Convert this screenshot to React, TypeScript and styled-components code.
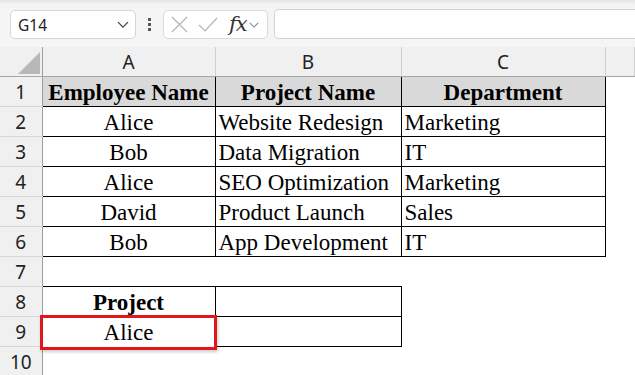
import React from 'react';
import styled, { createGlobalStyle } from 'styled-components';

const GlobalStyle = createGlobalStyle`
  html, body {
    margin: 0;
    padding: 0;
    background: #f5f5f5;
    overflow: hidden;
  }
  * {
    box-sizing: border-box;
  }
`;

const Window = styled.div`
  width: 635px;
  height: 375px;
  overflow: hidden;
  background: #f5f5f5;
  font-family: 'Noto Sans', 'Open Sans', sans-serif;
`;

const Toolbar = styled.div`
  height: 47px;
  display: flex;
  align-items: flex-start;
  padding-top: 9px;
  padding-left: 10px;
  background: linear-gradient(#e4e4e4 0px, #f3f3f3 4px, #f5f5f5 9px);
`;

const NameBox = styled.div`
  width: 126px;
  height: 29px;
  margin-top: 1px;
  background: #fff;
  border: 1px solid #d6d6d6;
  border-radius: 5px;
  display: flex;
  align-items: center;
  justify-content: space-between;
  padding: 0 6px 0 7px;
  font-size: 15.5px;
  color: #222;
`;

const Dots = styled.div`
  width: 27px;
  height: 29px;
  margin-top: 1px;
  display: flex;
  flex-direction: column;
  align-items: center;
  justify-content: center;
  gap: 2px;

  span {
    width: 3px;
    height: 3px;
    background: #555;
  }
`;

const FormulaTools = styled.div`
  width: 105px;
  height: 29px;
  margin-top: 1px;
  background: #fff;
  border: 1px solid #d9d9d9;
  border-radius: 5px;
  display: flex;
  align-items: center;
  padding: 0 5px 0 7px;
  gap: 10px;
`;

const Fx = styled.span`
  font-family: 'DejaVu Serif', 'Liberation Serif', serif;
  font-style: italic;
  font-size: 21px;
  line-height: 1;
  color: #333;
  margin-left: 1px;
  margin-right: -8px;
  letter-spacing: -1px;
`;

const FormulaInput = styled.div`
  flex: 1;
  height: 30px;
  margin-left: 6px;
  margin-right: -8px;
  background: #fff;
  border: 1px solid #d2d2d2;
  border-radius: 5px;
`;

const Sheet = styled.table`
  border-collapse: collapse;
  table-layout: fixed;
  width: 635px;
  background: #fff;
`;

const ColHeader = styled.th<{ $corner?: boolean }>`
  height: 29px;
  padding: 0;
  background: #f0f0f0;
  border-right: 1px solid ${(p) => (p.$corner ? '#9e9e9e' : '#cfcfcf')};
  border-bottom: 1px solid #a6a6a6;
  font-weight: 400;
  font-size: 19px;
  color: #222;
  vertical-align: middle;
`;

const Corner = styled.div`
  height: 29px;
  display: flex;
  align-items: flex-end;
  justify-content: flex-end;
  padding: 0 2px 2px 0;
`;

const Triangle = styled.div`
  width: 0;
  height: 0;
  border-left: 22px solid transparent;
  border-bottom: 22px solid #b8b8b8;
`;

const RowHeader = styled.th`
  height: 30px;
  padding: 0;
  background: #f0f0f0;
  border-right: 1px solid #9e9e9e;
  border-bottom: 1px solid #d6d6d6;
  font-weight: 400;
  font-size: 19px;
  color: #222;
  text-align: center;
  vertical-align: middle;
`;

const Cell = styled.td<{
  $boxed?: boolean;
  $head?: boolean;
  $bold?: boolean;
  $center?: boolean;
  $top?: boolean;
}>`
  height: 30px;
  padding: 2px 3px 0;
  font-family: 'Liberation Serif', 'Times New Roman', serif;
  font-size: 23px;
  font-weight: ${(p) => (p.$head || p.$bold ? 700 : 400)};
  color: #000;
  background: ${(p) => (p.$head ? '#d9d9d9' : '#fff')};
  text-align: ${(p) => (p.$center ? 'center' : 'left')};
  white-space: nowrap;
  vertical-align: middle;
  border: ${(p) => (p.$boxed ? '1px solid #000' : 'none')};
  border-top: ${(p) => (p.$boxed || p.$top ? '1px solid #000' : 'none')};
`;

const Selected = styled.div`
  position: relative;
  height: 28px;
  line-height: 28px;
  margin: 0 -3px;
  text-align: center;
`;

const Highlight = styled.div`
  position: absolute;
  left: -3px;
  top: -4px;
  right: -2px;
  bottom: -3px;
  border: 3px solid #e0171d;
  box-shadow: 1px 2px 3px rgba(0, 0, 0, 0.2);
  pointer-events: none;
`;

const Chevron = ({ size = 12, color = '#444' }: { size?: number; color?: string }) => (
  <svg width={size} height={size * 0.6} viewBox="0 0 12 7" fill="none">
    <path d="M1 1 L6 6 L11 1" stroke={color} strokeWidth="1.3" />
  </svg>
);

const Cross = () => (
  <svg width="17" height="17" viewBox="0 0 17 17" fill="none">
    <path d="M1 1 L16 16 M16 1 L1 16" stroke="#b4b4b4" strokeWidth="1.2" />
  </svg>
);

const Check = () => (
  <svg width="20" height="15" viewBox="0 0 20 15" fill="none">
    <path d="M1 8 L7 14 L19 1" stroke="#b4b4b4" strokeWidth="1.2" />
  </svg>
);

const employees = [
  ['Alice', 'Website Redesign', 'Marketing'],
  ['Bob', 'Data Migration', 'IT'],
  ['Alice', 'SEO Optimization', 'Marketing'],
  ['David', 'Product Launch', 'Sales'],
  ['Bob', 'App Development', 'IT'],
];

const App = () => {
  return (
    <Window>
      <GlobalStyle />
      <Toolbar>
        <NameBox>
          <span>G14</span>
          <Chevron />
        </NameBox>
        <Dots>
          <span />
          <span />
          <span />
        </Dots>
        <FormulaTools>
          <Cross />
          <Check />
          <Fx>fx</Fx>
          <Chevron size={10} color="#888" />
        </FormulaTools>
        <FormulaInput />
      </Toolbar>
      <Sheet>
        <colgroup>
          <col style={{ width: 42 }} />
          <col style={{ width: 173 }} />
          <col style={{ width: 186 }} />
          <col style={{ width: 204 }} />
          <col />
        </colgroup>
        <thead>
          <tr>
            <ColHeader $corner>
              <Corner>
                <Triangle />
              </Corner>
            </ColHeader>
            <ColHeader>A</ColHeader>
            <ColHeader>B</ColHeader>
            <ColHeader>C</ColHeader>
            <ColHeader />
          </tr>
        </thead>
        <tbody>
          <tr>
            <RowHeader>1</RowHeader>
            <Cell $boxed $head $center>Employee Name</Cell>
            <Cell $boxed $head $center>Project Name</Cell>
            <Cell $boxed $head $center>Department</Cell>
            <Cell />
          </tr>
          {employees.map(([name, project, dept], i) => (
            <tr key={i}>
              <RowHeader>{i + 2}</RowHeader>
              <Cell $boxed $center>{name}</Cell>
              <Cell $boxed>{project}</Cell>
              <Cell $boxed>{dept}</Cell>
              <Cell />
            </tr>
          ))}
          <tr>
            <RowHeader>7</RowHeader>
            <Cell />
            <Cell />
            <Cell />
            <Cell />
          </tr>
          <tr>
            <RowHeader>8</RowHeader>
            <Cell $top $bold $center>Project</Cell>
            <Cell $boxed />
            <Cell />
            <Cell />
          </tr>
          <tr>
            <RowHeader>9</RowHeader>
            <Cell>
              <Selected>
                Alice
                <Highlight />
              </Selected>
            </Cell>
            <Cell $boxed />
            <Cell />
            <Cell />
          </tr>
          <tr>
            <RowHeader>10</RowHeader>
            <Cell />
            <Cell />
            <Cell />
            <Cell />
          </tr>
        </tbody>
      </Sheet>
    </Window>
  );
};

export default App;
